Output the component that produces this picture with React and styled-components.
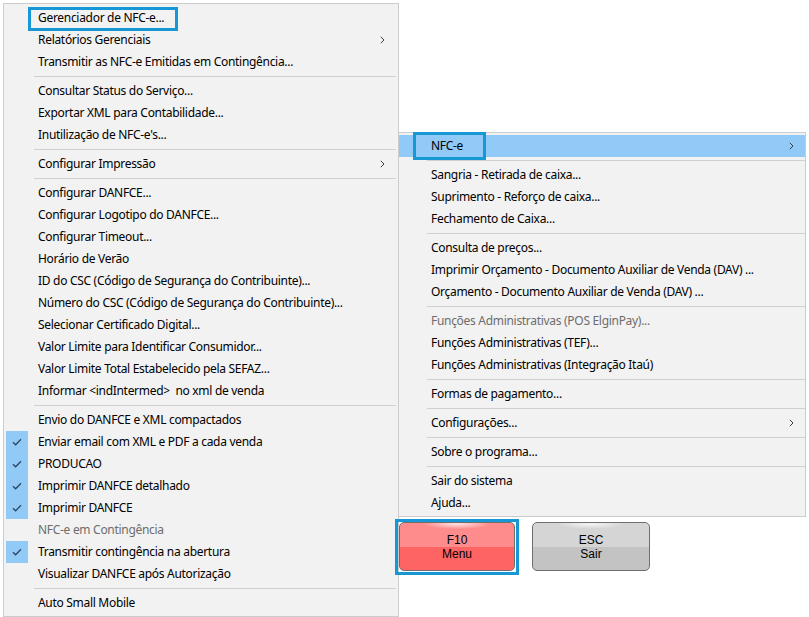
import React from 'react';
import styled, { createGlobalStyle } from 'styled-components';

const GlobalStyle = createGlobalStyle`
  html, body { margin: 0; padding: 0; background: #ffffff; }
  body {
    font-family: "Segoe UI", "Noto Sans", "Open Sans", sans-serif;
    font-size: 12px;
    color: #000;
    overflow: hidden;
  }
`;

const Page = styled.div`
  display: flex;
  align-items: flex-start;
  padding: 3px 0 0 3px;
  width: 809px;
  height: 617px;
  box-sizing: border-box;
`;

const Menu = styled.div`
  box-sizing: border-box;
  width: ${p => p.$width}px;
  background: #f2f2f2;
  border: 1px solid #cccccc;
  padding: ${p => p.$pad};
  display: flex;
  flex-direction: column;
`;

const Row = styled.div`
  position: relative;
  display: flex;
  align-items: center;
  height: 22px;
  padding-left: 32px;
  padding-right: 11px;
  background: ${p => (p.$active ? '#91c9f7' : 'transparent')};
  color: ${p => (p.$disabled ? '#6d6d6d' : '#000')};
  white-space: pre;
`;

const Label = styled.span`
  flex: 1;
  line-height: 22px;
  letter-spacing: -0.3px;
`;

const CheckBox = styled.span`
  position: absolute;
  left: 0;
  top: 0;
  width: 22px;
  height: 22px;
  background: #91c9f7;
  display: flex;
  align-items: center;
  justify-content: center;
`;

const Separator = styled.div`
  height: 7px;
  margin-left: 28px;
  display: flex;
  align-items: center;
  &::after {
    content: '';
    flex: 1;
    height: 1px;
    background: #cfcfcf;
  }
`;

const FocusRing = styled.span`
  position: absolute;
  left: ${p => p.$l}px;
  top: ${p => p.$t}px;
  width: ${p => p.$w}px;
  height: ${p => p.$h}px;
  box-sizing: border-box;
  border: 3px solid #1797d4;
  pointer-events: none;
  z-index: 2;
`;

const RightColumn = styled.div`
  display: flex;
  flex-direction: column;
  margin-left: -1px;
  padding-top: 129px;
`;

const ButtonRow = styled.div`
  display: flex;
  gap: 17px;
  padding: 5px 0 0 1px;
`;

const KeyButton = styled.div`
  position: relative;
  box-sizing: border-box;
  width: ${p => p.$w}px;
  height: 49px;
  border: 1px solid #6f6f6f;
  border-radius: 5px;
  display: flex;
  flex-direction: column;
  align-items: center;
  justify-content: center;
  font-family: "Liberation Sans", Arial, sans-serif;
  font-size: 12px;
  line-height: 14px;
  color: #000;
  background:
    radial-gradient(ellipse 34px 5px at 50% 1px, rgba(255,255,255,0.75), rgba(255,255,255,0) 100%),
    linear-gradient(to bottom, ${p => p.$top} 0%, ${p => p.$top} 50%, ${p => p.$bottom} 50%, ${p => p.$bottom} 100%);
`;

const Check = () => (
  <svg width="10" height="8" viewBox="0 0 10 8">
    <polyline points="1,4.2 3.6,6.8 9,1.2" fill="none" stroke="#2a4560" strokeWidth="1.25" />
  </svg>
);

const Chevron = () => (
  <svg width="5" height="8" viewBox="0 0 5 8">
    <polyline points="0.8,0.8 4,4 0.8,7.2" fill="none" stroke="#3c3c3c" strokeWidth="1" />
  </svg>
);

const SEP = 'sep';

const leftItems = [
  { label: 'Gerenciador de NFC-e...', ring: { l: 22, t: 0, w: 150, h: 24 } },
  { label: 'Relatórios Gerenciais', sub: true },
  { label: 'Transmitir as NFC-e Emitidas em Contingência...' },
  SEP,
  { label: 'Consultar Status do Serviço...' },
  { label: 'Exportar XML para Contabilidade...' },
  { label: "Inutilização de NFC-e's..." },
  SEP,
  { label: 'Configurar Impressão', sub: true },
  SEP,
  { label: 'Configurar DANFCE...' },
  { label: 'Configurar Logotipo do DANFCE...' },
  { label: 'Configurar Timeout...' },
  { label: 'Horário de Verão' },
  { label: 'ID do CSC (Código de Segurança do Contribuinte)...' },
  { label: 'Número do CSC (Código de Segurança do Contribuinte)...' },
  { label: 'Selecionar Certificado Digital...' },
  { label: 'Valor Limite para Identificar Consumidor...' },
  { label: 'Valor Limite Total Estabelecido pela SEFAZ...' },
  { label: 'Informar <indIntermed>  no xml de venda' },
  SEP,
  { label: 'Envio do DANFCE e XML compactados' },
  { label: 'Enviar email com XML e PDF a cada venda', checked: true },
  { label: 'PRODUCAO', checked: true },
  { label: 'Imprimir DANFCE detalhado', checked: true },
  { label: 'Imprimir DANFCE', checked: true },
  { label: 'NFC-e em Contingência', disabled: true },
  { label: 'Transmitir contingência na abertura', checked: true },
  { label: 'Visualizar DANFCE após Autorização' },
  SEP,
  { label: 'Auto Small Mobile' },
];

const rightItems = [
  { label: 'NFC-e', sub: true, active: true, ring: { l: 14, t: -3, w: 73, h: 28 } },
  SEP,
  { label: 'Sangria - Retirada de caixa...' },
  { label: 'Suprimento - Reforço de caixa...' },
  { label: 'Fechamento de Caixa...' },
  SEP,
  { label: 'Consulta de preços...' },
  { label: 'Imprimir Orçamento - Documento Auxiliar de Venda (DAV) ...' },
  { label: 'Orçamento - Documento Auxiliar de Venda (DAV) ...' },
  SEP,
  { label: 'Funções Administrativas (POS ElginPay)...', disabled: true },
  { label: 'Funções Administrativas (TEF)...' },
  { label: 'Funções Administrativas (Integração Itaú)' },
  SEP,
  { label: 'Formas de pagamento...' },
  SEP,
  { label: 'Configurações...', sub: true },
  SEP,
  { label: 'Sobre o programa...' },
  SEP,
  { label: 'Sair do sistema' },
  { label: 'Ajuda...' },
];

const MenuItems = ({ items }) =>
  items.map((it, i) =>
    it === SEP ? (
      <Separator key={i} />
    ) : (
      <Row key={i} $active={it.active} $disabled={it.disabled}>
        {it.checked && (
          <CheckBox>
            <Check />
          </CheckBox>
        )}
        <Label>{it.label}</Label>
        {it.sub && <Chevron />}
        {it.ring && <FocusRing $l={it.ring.l} $t={it.ring.t} $w={it.ring.w} $h={it.ring.h} />}
      </Row>
    )
  );

export default function App() {
  return (
    <>
      <GlobalStyle />
      <Page>
        <Menu $width={396} $pad="3px 2px 2px 2px">
          <MenuItems items={leftItems} />
        </Menu>
        <RightColumn>
          <Menu $width={408} $pad="2px 0">
            <MenuItems items={rightItems} />
          </Menu>
          <ButtonRow>
            <KeyButton $w={116} $top="#ff8c8c" $bottom="#ff6464">
              <span>F10</span>
              <span>Menu</span>
              <FocusRing $l={-5} $t={-4} $w={124} $h={56} />
            </KeyButton>
            <KeyButton $w={118} $top="#d5d5d5" $bottom="#c3c3c3">
              <span>ESC</span>
              <span>Sair</span>
            </KeyButton>
          </ButtonRow>
        </RightColumn>
      </Page>
    </>
  );
}
